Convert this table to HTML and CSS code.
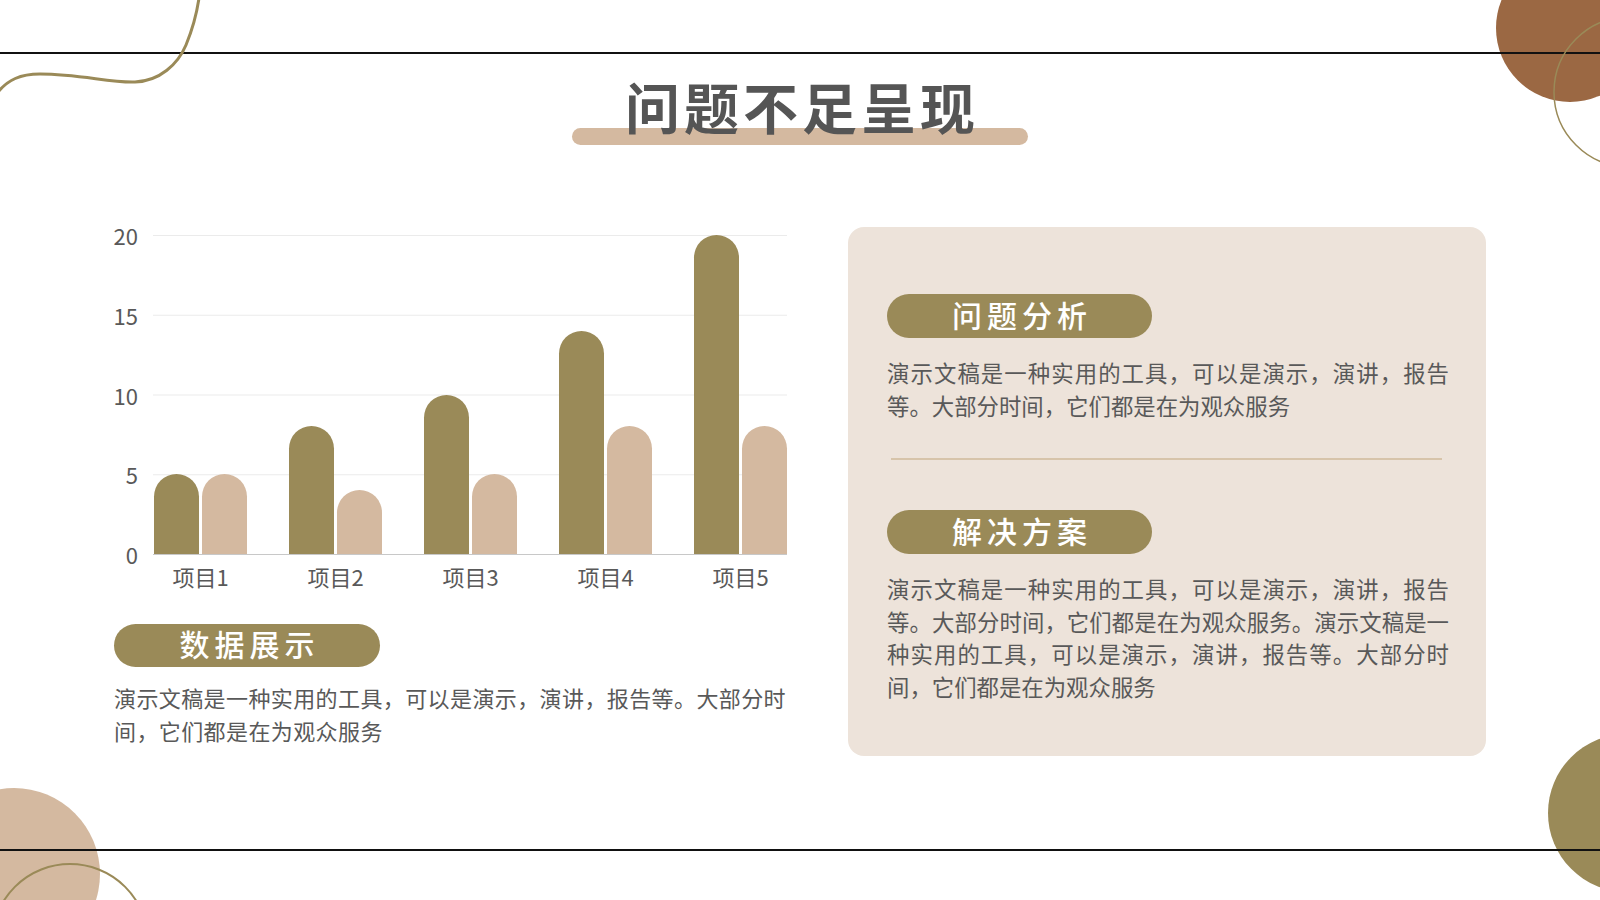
FILE: index.html
```html
<!DOCTYPE html>
<html lang="zh-CN">
<head>
<meta charset="utf-8">
<title>问题不足呈现</title>
<link rel="stylesheet" href="styles.css">
</head>
<body>
<div class="slide">
  <svg class="deco" width="1600" height="900" viewBox="0 0 1600 900" aria-hidden="true">
    <circle cx="1570" cy="28" r="74" fill="#9b6843"/>
    <circle cx="1627" cy="813" r="79" fill="#9a8a58"/>
    <circle cx="14" cy="874" r="86" fill="#d4b9a0"/>
    <line x1="0" y1="53" x2="1600" y2="53" stroke="#111" stroke-width="2"/>
    <line x1="0" y1="850" x2="1600" y2="850" stroke="#111" stroke-width="2"/>
    <circle cx="1629" cy="92" r="75" fill="none" stroke="#9a8a58" stroke-width="1.5"/>
    <circle cx="70" cy="942" r="78" fill="none" stroke="#9a8a58" stroke-width="2"/>
    <path d="M -2 92 C 8 80, 20 74, 40 74 C 80 74, 110 83, 135 82 C 160 81, 178 64, 186 45 C 193 28, 197 12, 199 -2" fill="none" stroke="#9a8a58" stroke-width="3"/>
  </svg>

  <header class="head">
    <h1 class="title"><span class="title-text">问题不足呈现</span></h1>
  </header>

  <main class="content">
    <section class="left">
      <div class="chart">
        <div class="yaxis">
          <span>20</span><span>15</span><span>10</span><span>5</span><span>0</span>
        </div>
        <div class="plotwrap">
          <div class="plot">
            <div class="group"><div class="bar dark" style="height:25%"></div><div class="bar light" style="height:25%"></div></div>
            <div class="group"><div class="bar dark" style="height:40%"></div><div class="bar light" style="height:20%"></div></div>
            <div class="group"><div class="bar dark" style="height:50%"></div><div class="bar light" style="height:25%"></div></div>
            <div class="group"><div class="bar dark" style="height:70%"></div><div class="bar light" style="height:40%"></div></div>
            <div class="group"><div class="bar dark" style="height:100%"></div><div class="bar light" style="height:40%"></div></div>
          </div>
          <div class="xaxis">
            <span>项目1</span><span>项目2</span><span>项目3</span><span>项目4</span><span>项目5</span>
          </div>
        </div>
      </div>
      <div class="pill pill-left">数据展示</div>
      <p class="desc desc-left">演示文稿是一种实用的工具，可以是演示，演讲，报告等。大部分时间，它们都是在为观众服务</p>
    </section>

    <section class="card">
      <div class="pill">问题分析</div>
      <p class="desc desc-card">演示文稿是一种实用的工具，可以是演示，演讲，报告等。大部分时间，它们都是在为观众服务</p>
      <div class="divider"></div>
      <div class="pill pill-second">解决方案</div>
      <p class="desc desc-card">演示文稿是一种实用的工具，可以是演示，演讲，报告等。大部分时间，它们都是在为观众服务。演示文稿是一种实用的工具，可以是演示，演讲，报告等。大部分时间，它们都是在为观众服务</p>
    </section>
  </main>
</div>
</body>
</html>
```

FILE: styles.css
```css
* { box-sizing: border-box; }

html, body {
  margin: 0;
  padding: 0;
  background: #ffffff;
}

body {
  font-family: "Noto Sans CJK SC", "Noto Sans", sans-serif;
  color: #595959;
}

.slide {
  position: relative;
  width: 1600px;
  height: 900px;
  overflow: hidden;
  background: #ffffff;
}

.deco {
  position: absolute;
  left: 0;
  top: 0;
  z-index: 0;
  pointer-events: none;
}

.head {
  position: relative;
  z-index: 1;
  padding-top: 73px;
  display: flex;
  justify-content: center;
}

.title {
  margin: 0;
  font-size: 55px;
  line-height: 64px;
  font-weight: 700;
  letter-spacing: 4px;
  color: #555555;
  isolation: isolate;
}

.title-text {
  position: relative;
  display: inline-block;
  padding-left: 4px;
}

.title-text::before {
  content: "";
  position: absolute;
  left: 50%;
  top: 55px;
  width: 456px;
  height: 17px;
  margin-left: -228px;
  border-radius: 9px;
  background: #d4b9a0;
  z-index: -1;
}

.content {
  position: relative;
  z-index: 1;
  display: flex;
  gap: 61px;
  margin-top: 90px;
  padding-left: 114px;
}

.left {
  width: 673px;
}

.chart {
  display: flex;
  gap: 15px;
  margin-top: 8px;
}

.yaxis {
  width: 24px;
  height: 341px;
  margin-top: -11px;
  display: flex;
  flex-direction: column;
  justify-content: space-between;
  align-items: flex-end;
  font-size: 22px;
  line-height: 22px;
  color: #595959;
}

.plotwrap {
  width: 634px;
}

.plot {
  height: 320px;
  padding-left: 1px;
  display: flex;
  justify-content: space-between;
  align-items: flex-end;
  border-bottom: 1px solid #c8c8c8;
  background-image: linear-gradient(#ebebeb 1px, transparent 1px);
  background-size: 100% 79.75px;
}

.group {
  width: 93px;
  height: 319px;
  display: flex;
  align-items: flex-end;
  gap: 3px;
}

.bar {
  width: 45px;
  border-radius: 23px 23px 0 0;
}

.bar.dark { background: #9a8a58; }
.bar.light { background: #d4b9a0; }

.xaxis {
  margin-top: 9px;
  padding-left: 1px;
  display: flex;
  justify-content: space-between;
  font-size: 22px;
  line-height: 24px;
  color: #595959;
}

.xaxis span {
  width: 93px;
  text-align: center;
}

.pill {
  width: 265px;
  height: 44px;
  padding-bottom: 4px;
  border-radius: 22px;
  background: #9a8a58;
  color: #ffffff;
  font-size: 30px;
  line-height: 40px;
  font-weight: 500;
  letter-spacing: 5px;
  text-indent: 5px;
  text-align: center;
}

.pill-left {
  width: 266px;
  height: 43px;
  line-height: 39px;
  margin-top: 36px;
}

.desc {
  margin: 0;
  font-size: 22px;
  line-height: 32.6px;
  color: #595959;
}

.desc-left {
  margin-top: 14px;
  width: 674px;
  letter-spacing: 0.4px;
}

.card {
  width: 638px;
  height: 529px;
  border-radius: 16px;
  background: #ede3da;
  padding: 67px 0 0 39px;
}

.desc-card {
  margin-top: 18px;
  width: 562px;
  font-size: 22.4px;
  text-align: justify;
}

.divider {
  margin-top: 37px;
  margin-left: 4px;
  width: 551px;
  height: 2px;
  background: #d7c4aa;
}

.pill-second {
  margin-top: 50px;
}
```
